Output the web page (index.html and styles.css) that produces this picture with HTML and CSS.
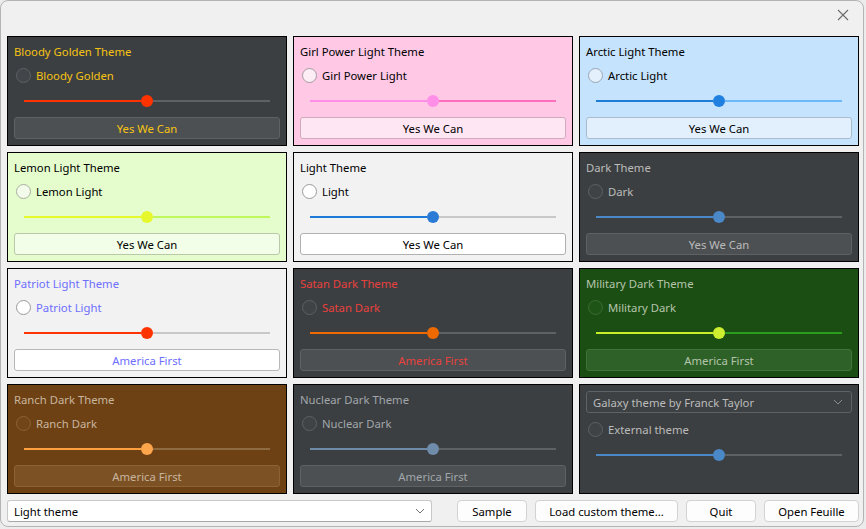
FILE: index.html
```html
<!DOCTYPE html>
<html>
<head>
<meta charset="utf-8">
<link rel="stylesheet" href="styles.css">
</head>
<body>
<div class="window">
  <div class="titlebar">
    <svg class="close" width="12" height="12" viewBox="0 0 12 12"><path d="M1 1 L11 11 M11 1 L1 11" stroke="#6b6b6b" stroke-width="1.1" fill="none"/></svg>
  </div>
  <div class="grid">
    <div class="panel t-golden">
      <div class="title">Bloody Golden Theme</div>
      <div class="radio-row"><span class="radio"></span><span>Bloody Golden</span></div>
      <div class="slider"><span class="fill"></span><span class="handle"></span><span class="rest"></span></div>
      <div class="btn">Yes We Can</div>
    </div>
    <div class="panel t-girl">
      <div class="title">Girl Power Light Theme</div>
      <div class="radio-row"><span class="radio"></span><span>Girl Power Light</span></div>
      <div class="slider"><span class="fill"></span><span class="handle"></span><span class="rest"></span></div>
      <div class="btn">Yes We Can</div>
    </div>
    <div class="panel t-arctic">
      <div class="title">Arctic Light Theme</div>
      <div class="radio-row"><span class="radio"></span><span>Arctic Light</span></div>
      <div class="slider"><span class="fill"></span><span class="handle"></span><span class="rest"></span></div>
      <div class="btn">Yes We Can</div>
    </div>
    <div class="panel t-lemon">
      <div class="title">Lemon Light Theme</div>
      <div class="radio-row"><span class="radio"></span><span>Lemon Light</span></div>
      <div class="slider"><span class="fill"></span><span class="handle"></span><span class="rest"></span></div>
      <div class="btn">Yes We Can</div>
    </div>
    <div class="panel t-light">
      <div class="title">Light Theme</div>
      <div class="radio-row"><span class="radio"></span><span>Light</span></div>
      <div class="slider"><span class="fill"></span><span class="handle"></span><span class="rest"></span></div>
      <div class="btn">Yes We Can</div>
    </div>
    <div class="panel t-dark">
      <div class="title">Dark Theme</div>
      <div class="radio-row"><span class="radio"></span><span>Dark</span></div>
      <div class="slider"><span class="fill"></span><span class="handle"></span><span class="rest"></span></div>
      <div class="btn">Yes We Can</div>
    </div>
    <div class="panel t-patriot">
      <div class="title">Patriot Light Theme</div>
      <div class="radio-row"><span class="radio"></span><span>Patriot Light</span></div>
      <div class="slider"><span class="fill"></span><span class="handle"></span><span class="rest"></span></div>
      <div class="btn">America First</div>
    </div>
    <div class="panel t-satan">
      <div class="title">Satan Dark Theme</div>
      <div class="radio-row"><span class="radio"></span><span>Satan Dark</span></div>
      <div class="slider"><span class="fill"></span><span class="handle"></span><span class="rest"></span></div>
      <div class="btn">America First</div>
    </div>
    <div class="panel t-military">
      <div class="title">Military Dark Theme</div>
      <div class="radio-row"><span class="radio"></span><span>Military Dark</span></div>
      <div class="slider"><span class="fill"></span><span class="handle"></span><span class="rest"></span></div>
      <div class="btn">America First</div>
    </div>
    <div class="panel t-ranch">
      <div class="title">Ranch Dark Theme</div>
      <div class="radio-row"><span class="radio"></span><span>Ranch Dark</span></div>
      <div class="slider"><span class="fill"></span><span class="handle"></span><span class="rest"></span></div>
      <div class="btn">America First</div>
    </div>
    <div class="panel t-nuclear">
      <div class="title">Nuclear Dark Theme</div>
      <div class="radio-row"><span class="radio"></span><span>Nuclear Dark</span></div>
      <div class="slider"><span class="fill"></span><span class="handle"></span><span class="rest"></span></div>
      <div class="btn">America First</div>
    </div>
    <div class="panel t-dark t-galaxy">
      <div class="combo dark-combo"><span>Galaxy theme by Franck Taylor</span>
        <svg width="10" height="6" viewBox="0 0 10 6"><path d="M1 1 L5 5 L9 1" stroke="#8a8d90" stroke-width="1" fill="none"/></svg>
      </div>
      <div class="radio-row galaxy-radio"><span class="radio"></span><span>External theme</span></div>
      <div class="slider"><span class="fill"></span><span class="handle"></span><span class="rest"></span></div>
    </div>
  </div>
  <div class="bottombar">
    <div class="combo light-combo"><span>Light theme</span>
      <svg width="10" height="6" viewBox="0 0 10 6"><path d="M1 1 L5 5 L9 1" stroke="#6f6f6f" stroke-width="1" fill="none"/></svg>
    </div>
    <div class="pbtn w-sample">Sample</div>
    <div class="pbtn w-load">Load custom theme...</div>
    <div class="pbtn w-quit">Quit</div>
    <div class="pbtn w-open">Open Feuille</div>
  </div>
</div>
</body>
</html>
```

FILE: styles.css
```css
* { box-sizing: border-box; }
html, body { margin: 0; padding: 0; }
body {
  width: 866px;
  height: 529px;
  overflow: hidden;
  background: #ececec;
  font-family: "Noto Sans", "Liberation Sans", sans-serif;
  font-size: 11.3px;
  color: #000;
}
.window {
  width: 864px;
  height: 527px;
  background: #f0f0f0;
  border: 1px solid #b4b4b4;
  border-radius: 8px;
  display: flex;
  flex-direction: column;
}
.titlebar {
  height: 35px;
  display: flex;
  justify-content: flex-end;
  align-items: flex-start;
  padding: 8px 14px 0 0;
}
.close { display: block; }
.grid {
  display: grid;
  grid-template-columns: repeat(3, 280px);
  grid-template-rows: repeat(4, 110px);
  gap: 6px;
  padding: 0 4px 0 6px;
}
.panel {
  border: 1px solid #000;
  padding: 6px;
  display: flex;
  flex-direction: column;
  background: var(--bg);
  color: var(--fg);
}
.title {
  height: 18px;
  line-height: 18px;
  white-space: nowrap;
}
.radio-row {
  height: 20px;
  margin-top: 4px;
  display: flex;
  align-items: center;
  padding-left: 2px;
  white-space: nowrap;
}
.radio {
  width: 15px;
  height: 15px;
  border-radius: 50%;
  border: 1px solid var(--rb);
  background: var(--rf);
  margin-right: 5px;
  flex: none;
}
.slider {
  height: 20px;
  margin-top: 6px;
  display: flex;
  align-items: center;
  padding: 0 10px;
}
.fill { flex: 1; height: 2px; background: var(--fill); }
.rest { flex: 1; height: 2px; background: var(--track); }
.handle {
  width: 12px;
  height: 12px;
  border-radius: 50%;
  background: var(--handle);
  flex: none;
}
.btn {
  height: 22px;
  margin-top: 6px;
  border: 1px solid var(--bb);
  background: var(--bbg);
  border-radius: 3px;
  text-align: center;
  line-height: 20px;
  padding-top: 1px;
  color: var(--fg);
}

/* themes */
.t-golden { --bg:#3c3f41; --fg:#f6c314; --rb:#5d6164; --rf:#42464a; --fill:#ff3300; --handle:#ff3300; --track:#5e6264; --bb:#5e6264; --bbg:#4c5052; }
.t-girl { --bg:#ffc9e6; --fg:#000; --rb:#a39aa0; --rf:#fdeef6; --fill:#ff8ee8; --handle:#ff8ee9; --track:#ff6ebd; --bb:#cfaabe; --bbg:#ffe6f3; }
.t-arctic { --bg:#c6e3fd; --fg:#000; --rb:#98a7b5; --rf:#e4f1fd; --fill:#1e7bd6; --handle:#1f80e0; --track:#6cb8f8; --bb:#a8bccb; --bbg:#e2f0fe; }
.t-lemon { --bg:#e5fdcd; --fg:#000; --rb:#a8b0a0; --rf:#f3fbea; --fill:#e6f92c; --handle:#e6f82c; --track:#c0f85c; --bb:#b8c8a8; --bbg:#f3fee8; }
.t-light { --bg:#f2f2f2; --fg:#000; --rb:#9a9a9a; --rf:#ffffff; --fill:#1e7ad8; --handle:#2a7ad6; --track:#c8c8c8; --bb:#b0b0b0; --bbg:#ffffff; }
.t-dark { --bg:#3c3f41; --fg:#bbbbbb; --rb:#5d6164; --rf:#3f4345; --fill:#4a88c7; --handle:#4a88c7; --track:#5e6264; --bb:#5e6264; --bbg:#4c5052; }
.t-patriot { --bg:#f2f2f2; --fg:#6e6eff; --rb:#9a9a9a; --rf:#ffffff; --fill:#ff3300; --handle:#ff3300; --track:#c8c8c8; --bb:#b8b8b8; --bbg:#ffffff; }
.t-satan { --bg:#3c3f41; --fg:#e8413e; --rb:#5d6164; --rf:#3f4345; --fill:#ee6a00; --handle:#ee6a00; --track:#5e6264; --bb:#5e6264; --bbg:#4c5052; }
.t-military { --bg:#1b4e12; --fg:#b5c4ac; --rb:#3a6c32; --rf:#1f5417; --fill:#c8ef2a; --handle:#cdef30; --track:#2a9c1c; --bb:#3f733a; --bbg:#2e6127; }
.t-ranch { --bg:#6d4114; --fg:#c8b59e; --rb:#8a6136; --rf:#714518; --fill:#ffa040; --handle:#ffa64c; --track:#8e6a40; --bb:#8d6336; --bbg:#7c5124; }
.t-nuclear { --bg:#3c3f41; --fg:#a0a6ab; --rb:#5d6164; --rf:#3f4345; --fill:#6d8aa8; --handle:#6f8cab; --track:#5e6264; --bb:#5e6264; --bbg:#4c5052; }

/* combos */
.combo {
  height: 22px;
  border-radius: 3px;
  display: flex;
  align-items: center;
  justify-content: space-between;
  padding: 0 8px 0 6px;
  white-space: nowrap;
}
.dark-combo {
  border: 1px solid #5e6264;
  background: #3d4143;
  color: #bbbbbb;
}
.galaxy-radio { margin-top: 6px; }

.bottombar {
  display: flex;
  gap: 8px;
  height: 22px;
  margin-top: 6px;
  padding: 0 4px 0 6px;
}
.light-combo {
  width: 425px;
  border: 1px solid #c9c9c9;
  border-bottom-color: #a8a8a8;
  background: #ffffff;
  color: #000;
  padding-right: 6px;
}
.pbtn {
  height: 22px;
  border: 1px solid #d2d2d2;
  border-radius: 4px;
  background: #fdfdfd;
  text-align: center;
  line-height: 20px;
  padding-top: 1px;
  white-space: nowrap;
}
.w-sample { width: 70px; margin-left: auto; }
.w-load { width: 143px; }
.w-quit { width: 70px; }
.w-open { width: 95px; }
```
